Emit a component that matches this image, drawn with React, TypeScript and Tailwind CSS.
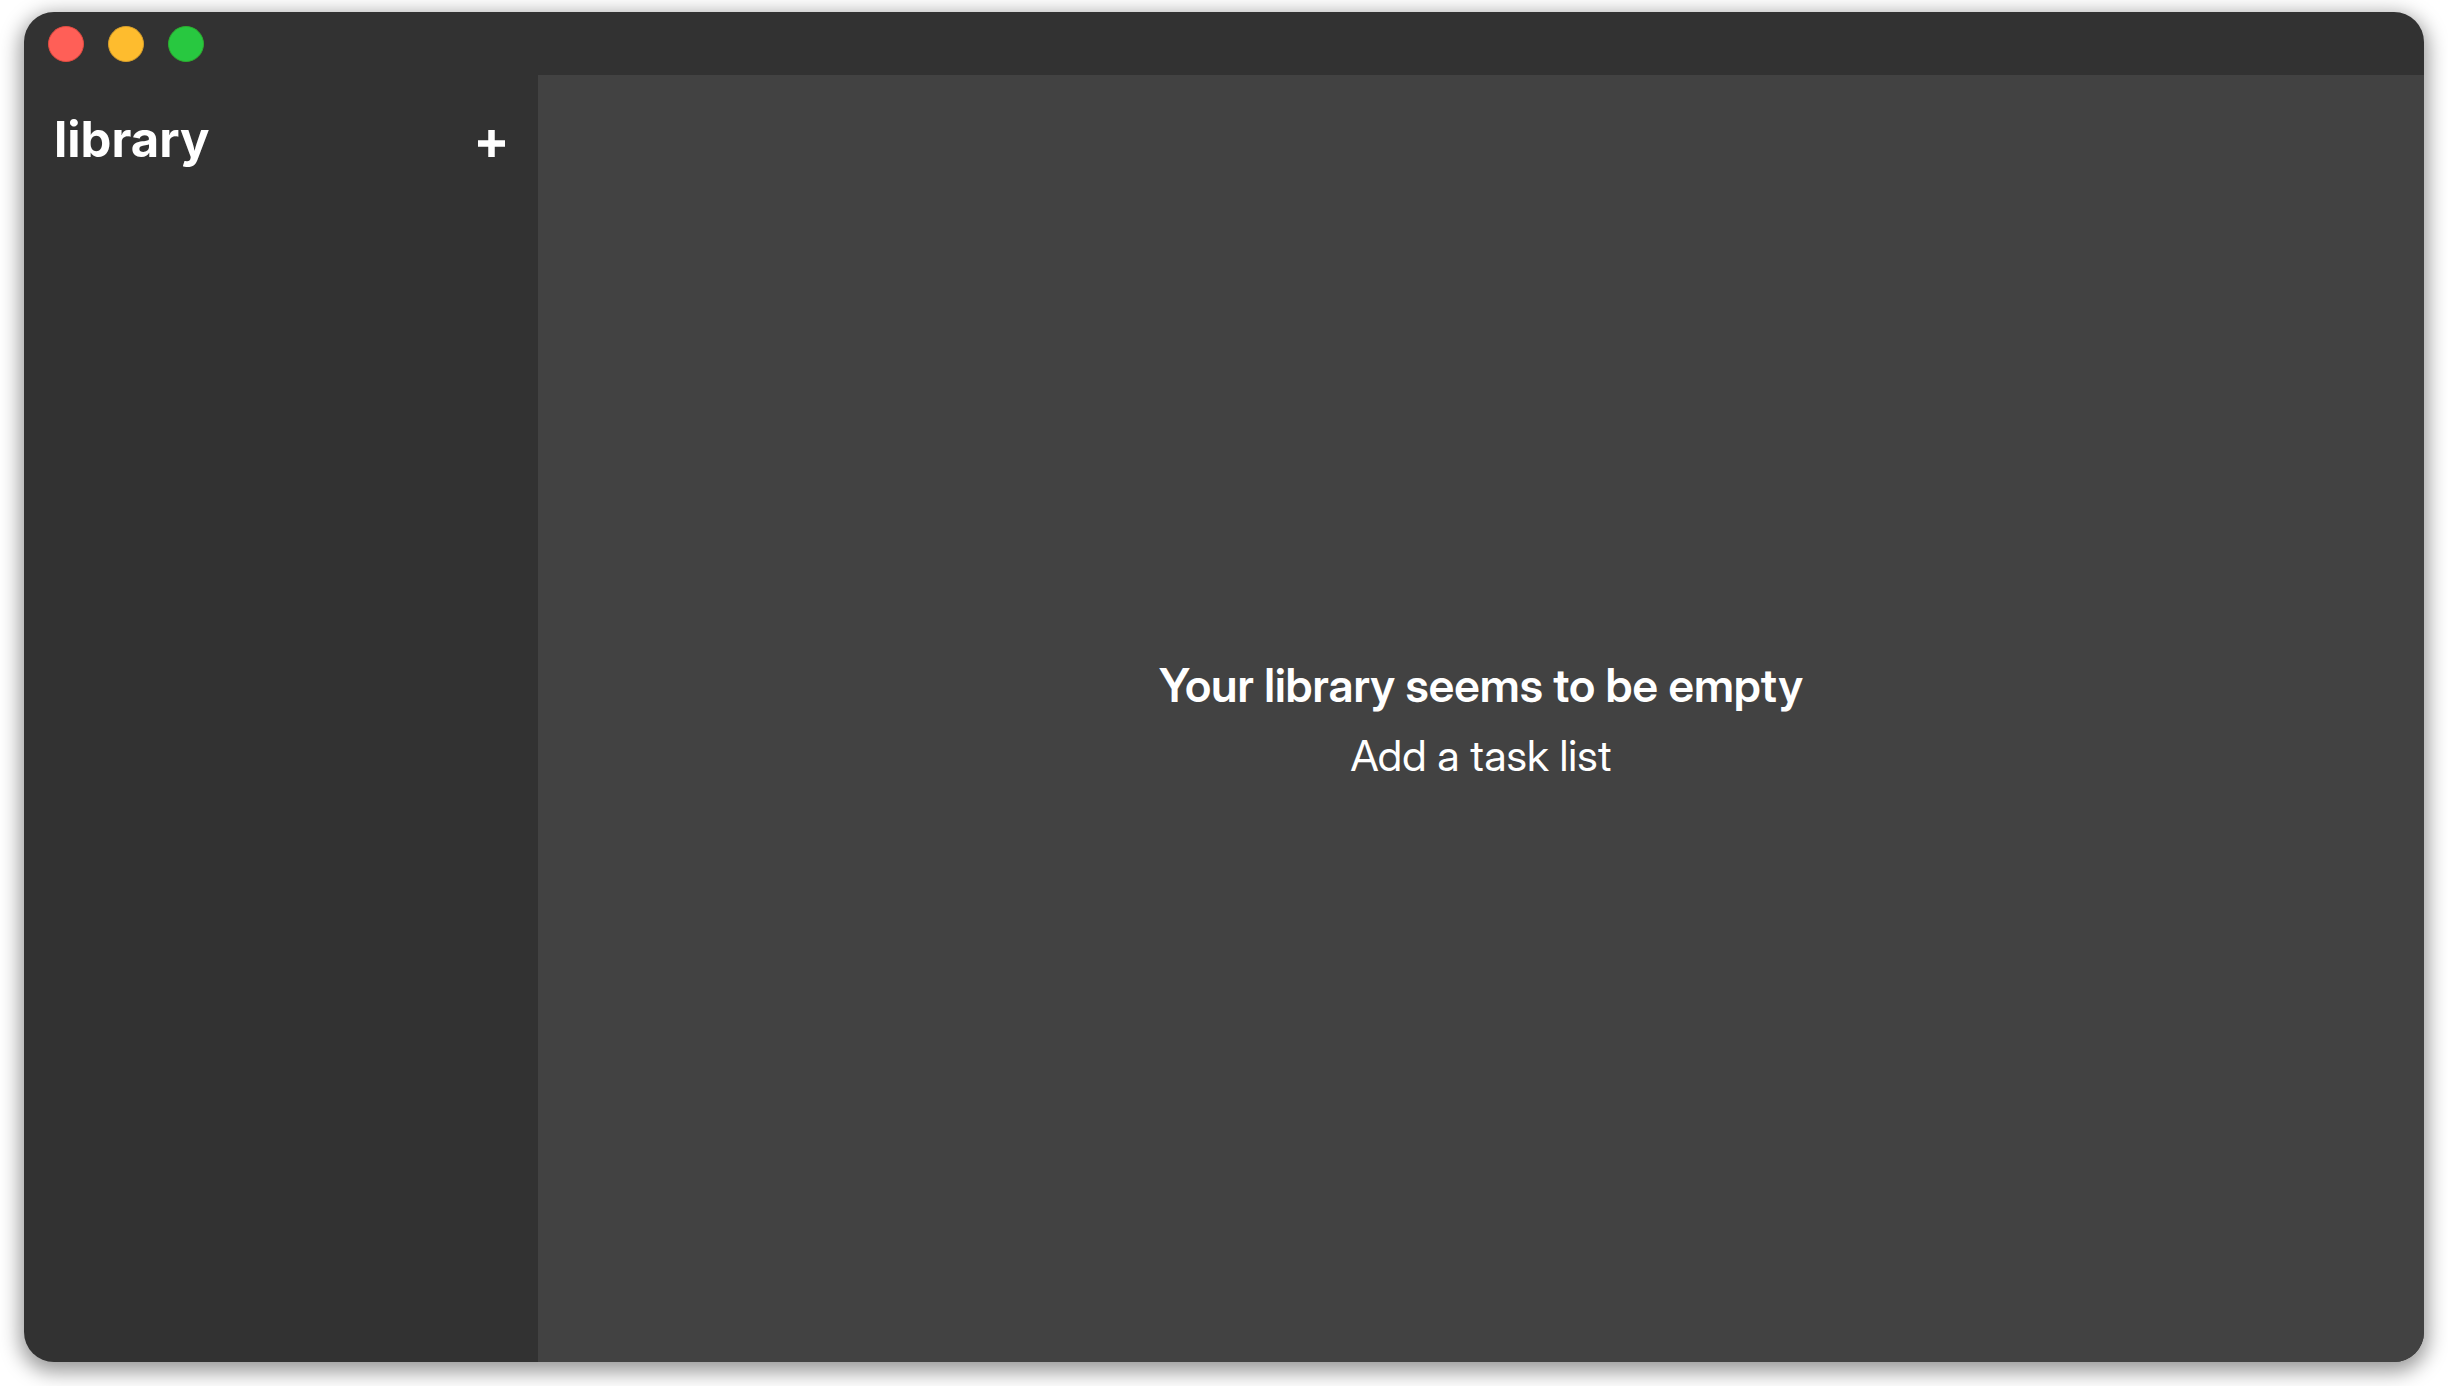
export default function App() {
  return (
    <div className="flex h-screen bg-white px-6 pt-3 pb-6 font-['Inter',sans-serif] text-white">
      <div className="flex flex-1 flex-col overflow-hidden rounded-[30px] bg-[#323232] shadow-[0_6px_20px_4px_rgba(0,0,0,0.4)]">
        <header className="flex h-[63px] shrink-0 items-center gap-6 px-6">
          <button aria-label="Close" className="size-9 rounded-full border border-[#e24b41] bg-[#ff5f57]" />
          <button aria-label="Minimize" className="size-9 rounded-full border border-[#d79e2b] bg-[#febc2e]" />
          <button aria-label="Zoom" className="size-9 rounded-full border border-[#2dac2f] bg-[#28c840]" />
        </header>
        <div className="flex min-h-0 flex-1">
          <aside className="w-[514px] shrink-0 pt-[33px] pr-[33px] pl-[30px]">
            <div className="flex items-baseline justify-between">
              <h1 className="text-[49px] leading-[64px] font-bold">library</h1>
              <button aria-label="Add a task list" className="h-[27px] w-[27px]">
                <svg viewBox="0 0 27 27" className="h-[27px] w-[27px]"><path d="M13.5 0v27M0 13.5h27" stroke="currentColor" strokeWidth="6.5" /></svg>
              </button>
            </div>
          </aside>
          <main className="flex flex-1 flex-col items-center justify-center bg-[#424242] pt-0.5 font-['Inter_Display',Inter,sans-serif]">
            <h2 className="text-[46px] leading-[70px] font-semibold">Your library seems to be empty</h2>
            <p className="text-[43px] leading-[70px]">Add a task list</p>
          </main>
        </div>
      </div>
    </div>
  );
}
